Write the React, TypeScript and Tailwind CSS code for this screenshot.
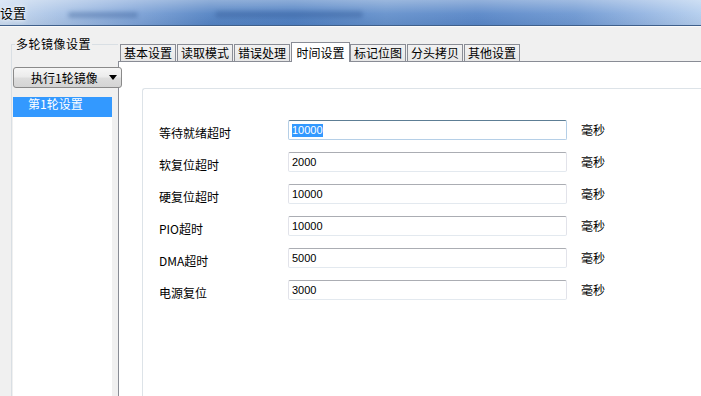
import { useState } from 'react';

interface TimeField {
  label: string;
  value: string;
}

const tabs = ['基本设置', '读取模式', '错误处理', '时间设置', '标记位图', '分头拷贝', '其他设置'];

const fields: TimeField[] = [
  { label: '等待就绪超时', value: '10000' },
  { label: '软复位超时', value: '2000' },
  { label: '硬复位超时', value: '10000' },
  { label: 'PIO超时', value: '10000' },
  { label: 'DMA超时', value: '5000' },
  { label: '电源复位', value: '3000' },
];

const TitleBar = () => (
  <div className="relative h-[26px] shrink-0 border-b border-[#3f5f8a] bg-[linear-gradient(90deg,#cadbf0_0%,#a9c3e6_8%,#82a6d9_18%,#5584c4_30%,#4f80c3_42%,#6591cc_55%,#5987c8_68%,#6e98d2_82%,#94b5e2_92%,#b4ceee_100%)]">
    <div className="absolute inset-0 bg-[linear-gradient(180deg,rgba(255,255,255,0.35)_0%,rgba(255,255,255,0.05)_55%,rgba(0,0,0,0.04)_100%)]" />
    <span className="absolute left-0 top-[5px] text-[13px] leading-[15px] text-black [text-shadow:0_0_6px_#ffffff,0_0_3px_#ffffff]">设置</span>
    <div className="absolute left-[68px] top-[12px] h-[6px] w-[70px] rounded-full bg-[#3a5f96] opacity-40 blur-[2px]" />
    <div className="absolute left-[215px] top-[11px] h-[7px] w-[148px] rounded-full bg-[#2f5590] opacity-35 blur-[2px]" />
  </div>
);

const TimeRow = ({ field, index }: { field: TimeField; index: number }) => {
  const focused = index === 0;
  return (
    <div className="flex h-[20px] items-center">
      <div className="mt-[5px] w-[129px] shrink-0 text-[12px] leading-[14px] text-black">{field.label}</div>
      <div
        className={`flex h-[20px] w-[279px] shrink-0 items-center rounded-[2px] border bg-white pl-[3px] ${
          focused
            ? 'border-[#b5cfe7] border-t-[#5d7e95]'
            : 'border-[#e2e3ea] border-t-[#abadb3] border-b-[#e3e9ef]'
        }`}
      >
        <span
          className={`font-['Liberation_Sans',sans-serif] text-[11px] leading-[13px] ${
            focused ? 'bg-[#3399ff] text-white' : 'text-black'
          }`}
        >
          {field.value}
        </span>
      </div>
      <div className="ml-[14px] text-[12px] leading-[14px] text-black">毫秒</div>
    </div>
  );
};

const App = () => {
  const [activeTab, setActiveTab] = useState(3);

  return (
    <div className="flex h-[396px] w-[701px] flex-col overflow-hidden bg-[#f0f0f0] font-['Noto_Sans_CJK_SC','Noto_Sans',sans-serif]">
      <TitleBar />
      <div className="flex flex-1 overflow-hidden border-t border-[#fafafa]">
        {/* left: round list */}
        <div className="relative z-10 w-[118px] shrink-0 pl-[11px] pt-[17px]">
          <div className="relative h-full border-l border-t border-[#d9dfe4] pl-[1px]">
            <span className="absolute -top-[8px] left-[3px] bg-[#f0f0f0] px-[1px] text-[12px] leading-[14px] tracking-[0.5px] text-black">
              多轮镜像设置
            </span>
            <button className="mt-[22px] flex h-[21px] w-[109px] items-center rounded-[3px] border border-[#8a8a8a] bg-[linear-gradient(180deg,#f6f6f6_0%,#ebebeb_48%,#dddddd_52%,#d4d4d4_100%)] pl-[17px] pr-[4px] text-[12px] leading-[14px] text-black">
              <span className="flex-1 text-left">执行1轮镜像</span>
              <svg width="8" height="5" viewBox="0 0 8 5">
                <path d="M0 0h8L4 5z" fill="#000" />
              </svg>
            </button>
            <div className="mt-[9px] h-full w-[99px] bg-white">
              <div className="h-[20px] bg-[#3399ff] pl-[15px] text-[12px] leading-[14px] text-white">第1轮设置</div>
            </div>
          </div>
        </div>

        {/* right: tabs */}
        <div className="flex flex-1 flex-col pt-[14px]">
          <div className="flex h-[20px] items-end pl-[2px]">
            {tabs.map((tab, i) =>
              i === activeTab ? (
                <button
                  key={tab}
                  onClick={() => setActiveTab(i)}
                  className="relative z-10 -mb-[1px] h-[20px] w-[59px] border border-b-0 border-[#898c95] bg-white pt-[1px] text-[12px] leading-[14px] text-black"
                >
                  {tab}
                </button>
              ) : (
                <button
                  key={tab}
                  onClick={() => setActiveTab(i)}
                  className="mr-[1px] h-[17px] w-[56px] border border-b-0 border-[#898c95] bg-[linear-gradient(180deg,#f2f2f2_0%,#e6e6e6_100%)] text-[12px] leading-[14px] text-black"
                >
                  {tab}
                </button>
              ),
            )}
          </div>
          <div className="flex-1 border-l border-t border-[#898c95] bg-white pl-[23px] pt-[26px]">
            <div className="h-full rounded-tl-[3px] border-l border-t border-[#dde3e8] pl-[16px] pt-[31px]">
              <div className="flex flex-col gap-[12px]">
                {fields.map((f, i) => (
                  <TimeRow key={f.label} field={f} index={i} />
                ))}
              </div>
            </div>
          </div>
        </div>
      </div>
    </div>
  );
};

export default App;
